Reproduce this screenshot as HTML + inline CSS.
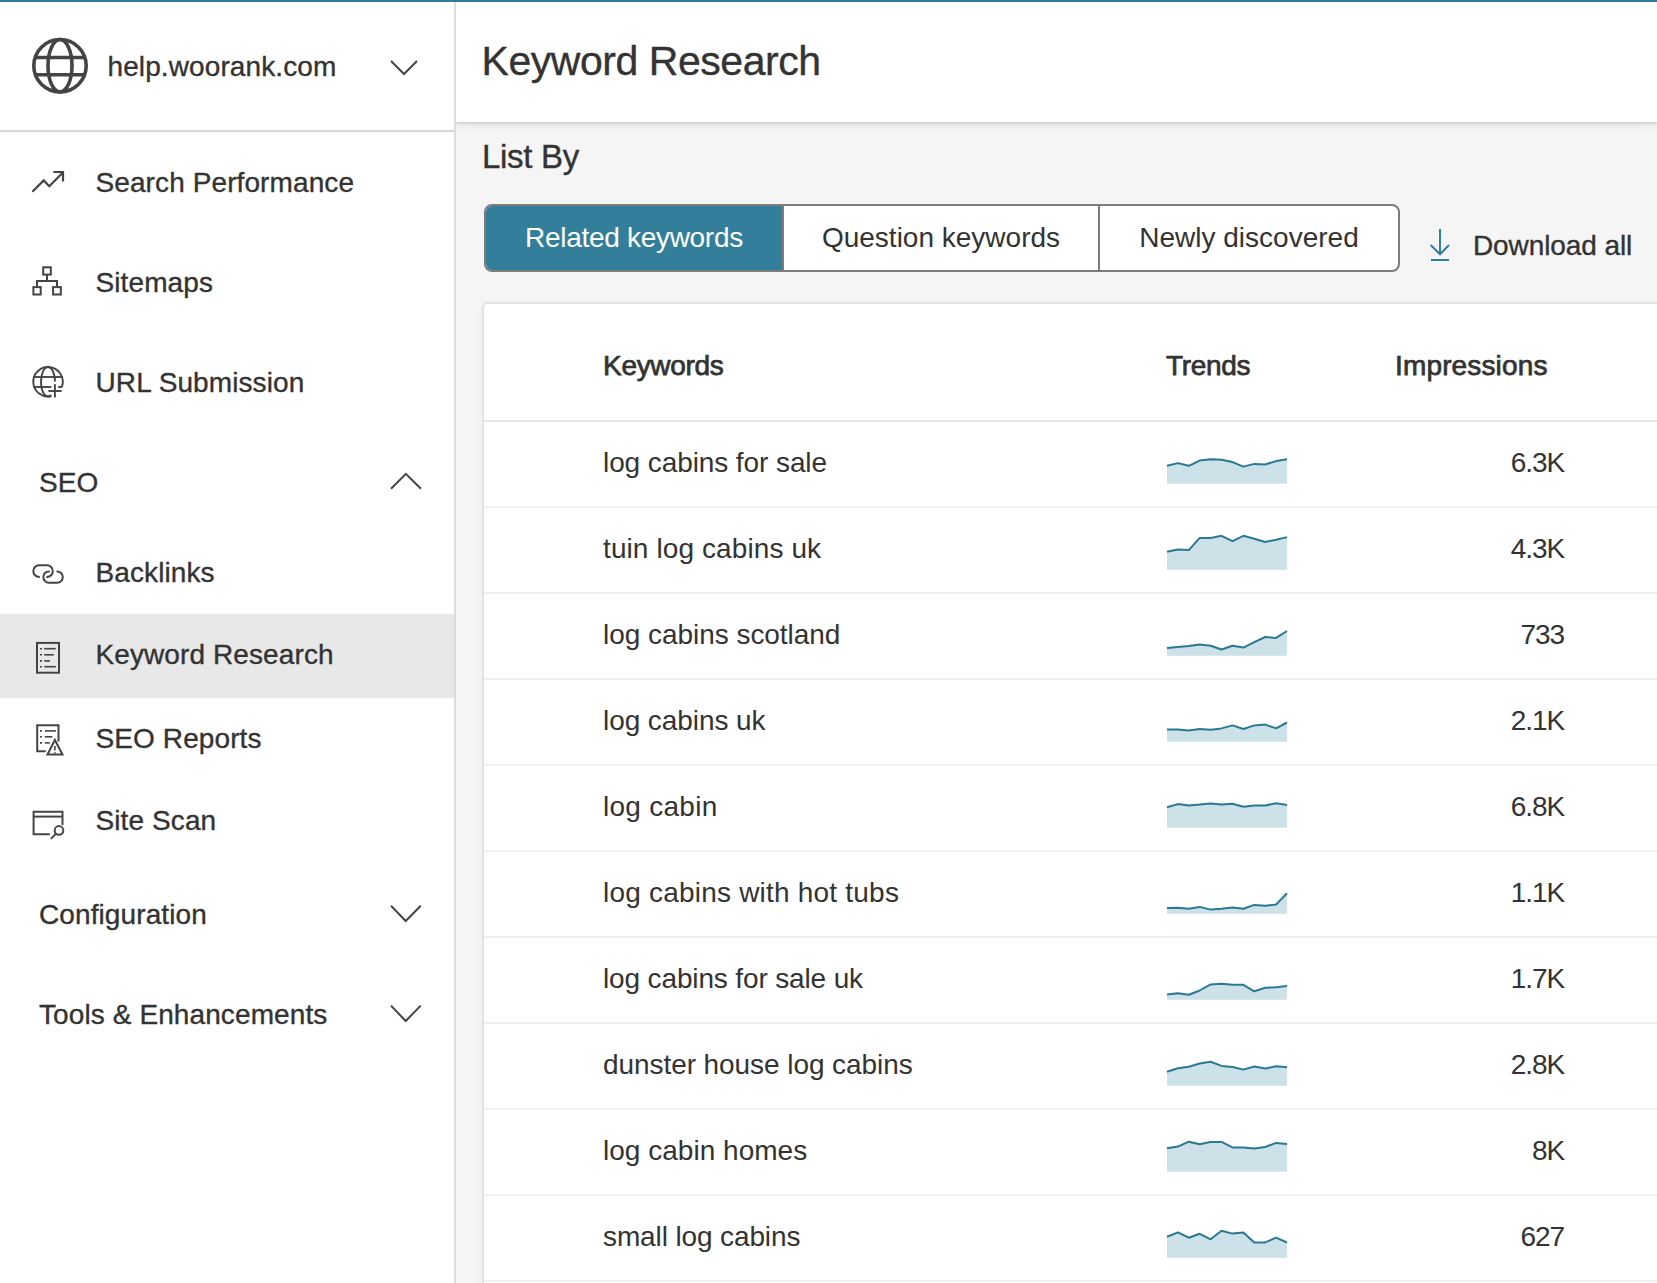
<!DOCTYPE html>
<html><head><meta charset="utf-8">
<style>
*{box-sizing:border-box;margin:0;padding:0}
html,body{width:1657px;height:1283px;overflow:hidden;background:#f5f5f5;font-family:"Liberation Sans",sans-serif;color:#333}
#topbar{position:absolute;left:0;top:0;width:1657px;height:2px;background:#2f7a95;z-index:5}
#side{position:absolute;left:0;top:0;width:456px;height:1283px;background:#fff;border-right:2px solid #dcdcdc;z-index:3}
#side .hdr{position:absolute;left:0;top:0;width:454px;height:132px;border-bottom:2px solid #d6d6d6}
#side .sel{position:absolute;left:0;top:614px;width:454px;height:84px;background:#e8e8e8}
.t{position:absolute;white-space:nowrap;font-size:28px;line-height:1;color:#333;z-index:4;-webkit-text-stroke:0.35px #333}
svg.ic{position:absolute;left:0;top:0;overflow:visible}
#mhdr{position:absolute;left:456px;top:2px;width:1201px;height:120px;background:#fff;box-shadow:0 2px 2px rgba(0,0,0,0.10),0 3px 10px rgba(0,0,0,0.07);z-index:2}
#btns{position:absolute;left:484px;top:204px;width:916px;height:68px;border:2px solid #7d7d7d;border-radius:8px;overflow:hidden;background:#fff}
#btns div{position:absolute;top:0;height:64px;font-size:28px;line-height:64px;text-align:center;color:#333;white-space:nowrap}
#card{position:absolute;left:482px;top:302px;width:1200px;height:1100px;background:#fff;border:2px solid #e3e3e3;border-radius:6px;box-shadow:-1px 0 4px rgba(0,0,0,0.03)}
.hl{position:absolute;left:484px;width:1173px;height:2px;background:#f1f1f1}
.kw{position:absolute;left:603px;white-space:nowrap;font-size:28px;line-height:1;color:#333}
.num{position:absolute;right:93px;white-space:nowrap;font-size:28px;line-height:1;color:#333;text-align:right;letter-spacing:-1.1px}
.th{position:absolute;white-space:nowrap;font-size:28px;line-height:1;font-weight:normal;color:#333;-webkit-text-stroke:0.75px #333;letter-spacing:-0.3px}
</style></head><body>
<div id="topbar"></div>
<div id="side">
<div class="hdr"></div>
<div class="sel"></div>

<div class="t" style="left:107.5px;top:52.8px;font-size:28px;letter-spacing:0.1px">help.woorank.com</div>
<div class="t" style="left:95.5px;top:168.8px;font-size:28px;letter-spacing:0.1px">Search Performance</div>
<div class="t" style="left:95.5px;top:268.8px;font-size:28px;letter-spacing:0.1px">Sitemaps</div>
<div class="t" style="left:95.5px;top:369.1px;font-size:28px;letter-spacing:0.1px">URL Submission</div>
<div class="t" style="left:39.0px;top:468.8px;font-size:28px;letter-spacing:0.1px">SEO</div>
<div class="t" style="left:95.5px;top:559.0px;font-size:28px;letter-spacing:0.1px">Backlinks</div>
<div class="t" style="left:95.5px;top:641.0px;font-size:28px;letter-spacing:0.1px">Keyword Research</div>
<div class="t" style="left:95.5px;top:724.6px;font-size:28px;letter-spacing:0.1px">SEO Reports</div>
<div class="t" style="left:95.5px;top:806.8px;font-size:28px;letter-spacing:0.1px">Site Scan</div>
<div class="t" style="left:39.0px;top:900.5px;font-size:28px;letter-spacing:0.1px">Configuration</div>
<div class="t" style="left:39.0px;top:1000.8px;font-size:28px;letter-spacing:0.1px">Tools &amp; Enhancements</div>
<svg class="ic" width="456" height="1283" fill="none" stroke="#444" stroke-width="2.2">
<!-- globe header -->
<g stroke-width="3.6">
<circle cx="60" cy="65.7" r="26.2"/>
<ellipse cx="60" cy="65.7" rx="12" ry="26.2"/>
<line x1="34" y1="57.5" x2="86" y2="57.5"/>
<line x1="34" y1="74.7" x2="86" y2="74.7"/>
</g>
<!-- chevron header -->
<polyline points="391,61 404,74 417,61" stroke-width="2"/>
<!-- trend -->
<polyline points="32.4,191.7 43.7,180.4 49.3,186.2 62.9,172.4"/>
<polyline points="53.3,172 63,172 63,181.5"/>
<!-- sitemap -->
<g stroke-width="2">
<rect x="43.2" y="267.3" width="7.6" height="7.3"/>
<rect x="33.4" y="287.1" width="7.3" height="7.4"/>
<rect x="53.1" y="287.1" width="7.7" height="7.4"/>
<polyline points="47,274.6 47,281"/>
<polyline points="37,286.1 37,281 57,281 57,286.1"/>
</g>
<!-- url submission globe -->
<g stroke-width="1.9">
<path d="M51.5,396.1 A14.75,14.75 0 1 1 61.8,387"/>
<path d="M55,381.5 A7,14.75 0 0 0 48,367.05 A7,14.75 0 0 0 41,381.8 A7,14.75 0 0 0 51.1,395"/>
<line x1="33.5" y1="377" x2="62.5" y2="377"/>
<line x1="33.5" y1="387" x2="51.3" y2="387"/>
<line x1="58.2" y1="387" x2="62" y2="387"/>
<line x1="54.9" y1="384.2" x2="54.9" y2="397.4"/>
<line x1="48.4" y1="391" x2="61.6" y2="391"/>
</g>
<!-- chevron SEO up -->
<polyline points="391,488.8 405.9,473.8 420.9,488.8" stroke-width="2"/>
<!-- backlinks -->
<g stroke-width="2">
<path d="M39.8,577 L39.15,577 A5.85,5.85 0 0 1 39.15,565.3 L46.95,565.3 A5.85,5.85 0 0 1 46.95,577 L46.3,577"/>
<path d="M56.5,571.4 L57.1,571.4 A5.7,5.7 0 0 1 57.1,582.8 L49,582.8 A5.7,5.7 0 0 1 49,571.4 L49.8,571.4"/>
</g>
<!-- KR -->
<rect x="37" y="642.9" width="22" height="29.8" stroke-width="2"/>
<g stroke-width="1.6">
<line x1="40" y1="648.7" x2="42" y2="648.7"/><line x1="44.2" y1="648.7" x2="55.8" y2="648.7"/>
<line x1="40" y1="654.8" x2="42" y2="654.8"/><line x1="44.2" y1="654.8" x2="53.8" y2="654.8"/>
<line x1="40" y1="660.9" x2="42" y2="660.9"/><line x1="44.2" y1="660.9" x2="50" y2="660.9"/>
<line x1="40" y1="666.7" x2="42" y2="666.7"/><line x1="44.2" y1="666.7" x2="55.8" y2="666.7"/>
</g>
<!-- SEO reports -->
<polyline points="45.8,751.3 37.2,751.3 37.2,725.3 58.5,725.3 58.5,741.4" stroke-width="2"/>
<g stroke-width="1.6">
<line x1="40" y1="730.9" x2="42" y2="730.9"/><line x1="44.8" y1="730.9" x2="55.9" y2="730.9"/>
<line x1="40" y1="736.8" x2="42" y2="736.8"/><line x1="44.8" y1="736.8" x2="52.4" y2="736.8"/>
<line x1="40" y1="742.9" x2="42" y2="742.9"/><line x1="44.8" y1="742.9" x2="49.8" y2="742.9"/>
</g>
<polygon points="54.9,740 47.5,754.5 62.5,754.5" stroke-width="2"/>
<line x1="54.9" y1="746" x2="54.9" y2="750.5" stroke-width="1.6"/>
<line x1="54.9" y1="752.2" x2="54.9" y2="753.6" stroke-width="1.6"/>
<!-- site scan -->
<polyline points="49.8,834.2 33.6,834.2 33.6,811.8 62.5,811.8 62.5,825" stroke-width="2"/>
<line x1="33.6" y1="816.6" x2="62.5" y2="816.6" stroke-width="2"/>
<circle cx="59" cy="830.4" r="4.3" stroke-width="2"/>
<line x1="56" y1="833.6" x2="50.9" y2="838.9" stroke-width="2"/>
<!-- chevrons config/tools -->
<polyline points="391,905.8 405.7,921 420.7,905.8" stroke-width="2"/>
<polyline points="391,1005.6 405.7,1021 420.7,1005.6" stroke-width="2"/>
</svg>

</div>
<div id="mhdr"></div>
<div class="t" style="left:481.5px;top:41.49px;font-size:41px;letter-spacing:-0.45px">Keyword Research</div>
<div class="t" style="left:482px;top:140.47px;font-size:33px;letter-spacing:-0.3px">List By</div>
<div id="btns">
<div style="left:0;width:296px;background:#337f9b;color:#fff;letter-spacing:-0.3px">Related keywords</div>
<div style="left:296px;width:318px;border-left:2px solid #7d7d7d;border-right:2px solid #7d7d7d">Question keywords</div>
<div style="left:614px;width:298px">Newly discovered</div>
</div>
<svg class="ic" width="1657" height="1283" fill="none" stroke="#2f80a0" stroke-width="2" style="z-index:4">
<line x1="1440" y1="229" x2="1440" y2="253"/>
<polyline points="1430.7,245 1440,254.3 1449,245"/>
<line x1="1431" y1="260" x2="1449" y2="260"/>
</svg>
<div class="t" style="left:1473px;top:232.1px;font-size:28px;letter-spacing:-0.1px">Download all</div>
<div id="card"></div>
<div class="hl" style="top:420px;background:#e6e6e6"></div>
<div class="th" style="left:603px;top:351.9px">Keywords</div>
<div class="th" style="left:1166px;top:351.9px">Trends</div>
<div class="th" style="left:1395px;top:351.9px;letter-spacing:0.15px">Impressions</div>
<div class="kw" style="top:449.0px;letter-spacing:-0.09px">log cabins for sale</div>
<div class="num" style="top:449.0px">6.3K</div>
<div class="hl" style="top:506px"></div>
<div class="kw" style="top:535.0px;letter-spacing:0.1px">tuin log cabins uk</div>
<div class="num" style="top:535.0px">4.3K</div>
<div class="hl" style="top:592px"></div>
<div class="kw" style="top:621.0px;letter-spacing:-0.04px">log cabins scotland</div>
<div class="num" style="top:621.0px">733</div>
<div class="hl" style="top:678px"></div>
<div class="kw" style="top:707.0px;letter-spacing:-0.07px">log cabins uk</div>
<div class="num" style="top:707.0px">2.1K</div>
<div class="hl" style="top:764px"></div>
<div class="kw" style="top:793.0px;letter-spacing:0.27px">log cabin</div>
<div class="num" style="top:793.0px">6.8K</div>
<div class="hl" style="top:850px"></div>
<div class="kw" style="top:879.0px;letter-spacing:0.21px">log cabins with hot tubs</div>
<div class="num" style="top:879.0px">1.1K</div>
<div class="hl" style="top:936px"></div>
<div class="kw" style="top:965.0px;letter-spacing:-0.14px">log cabins for sale uk</div>
<div class="num" style="top:965.0px">1.7K</div>
<div class="hl" style="top:1022px"></div>
<div class="kw" style="top:1051.0px;letter-spacing:-0.07px">dunster house log cabins</div>
<div class="num" style="top:1051.0px">2.8K</div>
<div class="hl" style="top:1108px"></div>
<div class="kw" style="top:1137.0px;letter-spacing:0.02px">log cabin homes</div>
<div class="num" style="top:1137.0px">8K</div>
<div class="hl" style="top:1194px"></div>
<div class="kw" style="top:1223.0px;letter-spacing:-0.12px">small log cabins</div>
<div class="num" style="top:1223.0px">627</div>
<div class="hl" style="top:1280px"></div>
<svg class="ic" width="1657" height="1283" style="z-index:1">
<polygon points="1167,483.7 1167.0,465.8 1177.9,463.1 1188.8,465.8 1199.7,460.6 1210.6,459.3 1221.5,459.8 1232.5,462.1 1243.4,466.6 1254.3,463.9 1265.2,464.5 1276.1,461.1 1287.0,459.3 1287,483.7" fill="#cce2e8"/>
<polyline points="1167.0,465.8 1177.9,463.1 1188.8,465.8 1199.7,460.6 1210.6,459.3 1221.5,459.8 1232.5,462.1 1243.4,466.6 1254.3,463.9 1265.2,464.5 1276.1,461.1 1287.0,459.3" fill="none" stroke="#2b7894" stroke-width="2" stroke-linejoin="round"/>
<polygon points="1167,569.7 1167.0,551.8 1177.9,549.5 1188.8,550.1 1199.7,537.9 1210.6,537.9 1221.5,535.8 1232.5,541.2 1243.4,535.8 1254.3,538.7 1265.2,542.0 1276.1,539.7 1287.0,537.1 1287,569.7" fill="#cce2e8"/>
<polyline points="1167.0,551.8 1177.9,549.5 1188.8,550.1 1199.7,537.9 1210.6,537.9 1221.5,535.8 1232.5,541.2 1243.4,535.8 1254.3,538.7 1265.2,542.0 1276.1,539.7 1287.0,537.1" fill="none" stroke="#2b7894" stroke-width="2" stroke-linejoin="round"/>
<polygon points="1167,655.7 1167.0,648.1 1177.9,646.9 1188.8,646.1 1199.7,644.6 1210.6,645.7 1221.5,649.5 1232.5,645.7 1243.4,647.6 1254.3,642.2 1265.2,637.0 1276.1,637.9 1287.0,631.0 1287,655.7" fill="#cce2e8"/>
<polyline points="1167.0,648.1 1177.9,646.9 1188.8,646.1 1199.7,644.6 1210.6,645.7 1221.5,649.5 1232.5,645.7 1243.4,647.6 1254.3,642.2 1265.2,637.0 1276.1,637.9 1287.0,631.0" fill="none" stroke="#2b7894" stroke-width="2" stroke-linejoin="round"/>
<polygon points="1167,741.7 1167.0,729.6 1177.9,729.6 1188.8,730.6 1199.7,729.0 1210.6,729.8 1221.5,728.4 1232.5,725.4 1243.4,729.0 1254.3,725.4 1265.2,724.6 1276.1,728.4 1287.0,722.5 1287,741.7" fill="#cce2e8"/>
<polyline points="1167.0,729.6 1177.9,729.6 1188.8,730.6 1199.7,729.0 1210.6,729.8 1221.5,728.4 1232.5,725.4 1243.4,729.0 1254.3,725.4 1265.2,724.6 1276.1,728.4 1287.0,722.5" fill="none" stroke="#2b7894" stroke-width="2" stroke-linejoin="round"/>
<polygon points="1167,827.7 1167.0,807.3 1177.9,804.1 1188.8,805.5 1199.7,804.6 1210.6,803.4 1221.5,804.4 1232.5,803.8 1243.4,806.8 1254.3,805.5 1265.2,805.5 1276.1,803.3 1287.0,804.9 1287,827.7" fill="#cce2e8"/>
<polyline points="1167.0,807.3 1177.9,804.1 1188.8,805.5 1199.7,804.6 1210.6,803.4 1221.5,804.4 1232.5,803.8 1243.4,806.8 1254.3,805.5 1265.2,805.5 1276.1,803.3 1287.0,804.9" fill="none" stroke="#2b7894" stroke-width="2" stroke-linejoin="round"/>
<polygon points="1167,913.7 1167.0,908.0 1177.9,907.8 1188.8,908.8 1199.7,906.9 1210.6,909.6 1221.5,908.8 1232.5,907.5 1243.4,908.8 1254.3,904.9 1265.2,905.7 1276.1,904.5 1287.0,893.3 1287,913.7" fill="#cce2e8"/>
<polyline points="1167.0,908.0 1177.9,907.8 1188.8,908.8 1199.7,906.9 1210.6,909.6 1221.5,908.8 1232.5,907.5 1243.4,908.8 1254.3,904.9 1265.2,905.7 1276.1,904.5 1287.0,893.3" fill="none" stroke="#2b7894" stroke-width="2" stroke-linejoin="round"/>
<polygon points="1167,999.7 1167.0,994.6 1177.9,993.2 1188.8,994.8 1199.7,990.5 1210.6,984.4 1221.5,983.7 1232.5,984.8 1243.4,984.8 1254.3,991.3 1265.2,987.8 1276.1,987.2 1287.0,986.0 1287,999.7" fill="#cce2e8"/>
<polyline points="1167.0,994.6 1177.9,993.2 1188.8,994.8 1199.7,990.5 1210.6,984.4 1221.5,983.7 1232.5,984.8 1243.4,984.8 1254.3,991.3 1265.2,987.8 1276.1,987.2 1287.0,986.0" fill="none" stroke="#2b7894" stroke-width="2" stroke-linejoin="round"/>
<polygon points="1167,1085.7 1167.0,1071.8 1177.9,1068.3 1188.8,1066.7 1199.7,1063.5 1210.6,1061.8 1221.5,1065.9 1232.5,1067.0 1243.4,1069.6 1254.3,1066.5 1265.2,1068.6 1276.1,1066.3 1287.0,1067.3 1287,1085.7" fill="#cce2e8"/>
<polyline points="1167.0,1071.8 1177.9,1068.3 1188.8,1066.7 1199.7,1063.5 1210.6,1061.8 1221.5,1065.9 1232.5,1067.0 1243.4,1069.6 1254.3,1066.5 1265.2,1068.6 1276.1,1066.3 1287.0,1067.3" fill="none" stroke="#2b7894" stroke-width="2" stroke-linejoin="round"/>
<polygon points="1167,1171.7 1167.0,1148.2 1177.9,1146.6 1188.8,1141.7 1199.7,1144.3 1210.6,1142.1 1221.5,1141.9 1232.5,1147.4 1243.4,1147.6 1254.3,1148.6 1265.2,1147.0 1276.1,1142.9 1287.0,1144.0 1287,1171.7" fill="#cce2e8"/>
<polyline points="1167.0,1148.2 1177.9,1146.6 1188.8,1141.7 1199.7,1144.3 1210.6,1142.1 1221.5,1141.9 1232.5,1147.4 1243.4,1147.6 1254.3,1148.6 1265.2,1147.0 1276.1,1142.9 1287.0,1144.0" fill="none" stroke="#2b7894" stroke-width="2" stroke-linejoin="round"/>
<polygon points="1167,1257.7 1167.0,1236.7 1177.9,1232.4 1188.8,1237.7 1199.7,1233.8 1210.6,1239.3 1221.5,1230.8 1232.5,1233.6 1243.4,1232.6 1254.3,1242.4 1265.2,1242.4 1276.1,1237.7 1287.0,1242.5 1287,1257.7" fill="#cce2e8"/>
<polyline points="1167.0,1236.7 1177.9,1232.4 1188.8,1237.7 1199.7,1233.8 1210.6,1239.3 1221.5,1230.8 1232.5,1233.6 1243.4,1232.6 1254.3,1242.4 1265.2,1242.4 1276.1,1237.7 1287.0,1242.5" fill="none" stroke="#2b7894" stroke-width="2" stroke-linejoin="round"/>
</svg>
</body></html>
